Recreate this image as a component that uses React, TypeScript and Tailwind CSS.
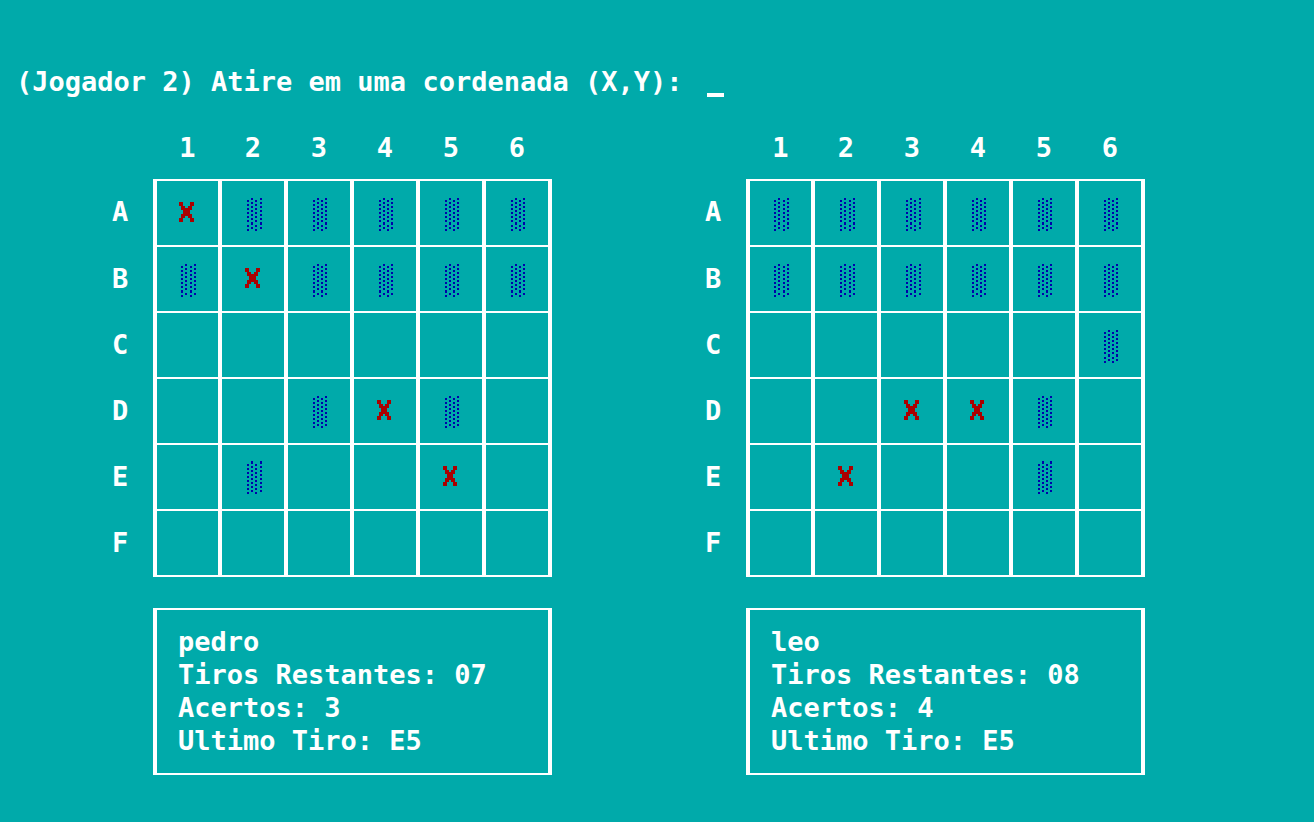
const ROWS = ["A", "B", "C", "D", "E", "F"];
const COLUMNS = [1, 2, 3, 4, 5, 6];

type Player = {
  name: string;
  shots: string;
  hits: string;
  last: string;
  board: string[];
  dotColumns: number[][];
};

// "x" is a hit, "o" is a cell in shade, "." is open water
const PLAYERS: Player[] = [
  {
    name: "pedro",
    shots: "07",
    hits: "3",
    last: "E5",
    board: ["xooooo", "oxoooo", "......", "..oxo.", ".o..x.", "......"],
    dotColumns: [[0, 4, 9, 13], [1, 5, 9, 14]],
  },
  {
    name: "leo",
    shots: "08",
    hits: "4",
    last: "E5",
    board: ["oooooo", "oooooo", ".....o", "..xxo.", ".x..o.", "......"],
    dotColumns: [[0, 4, 9, 13], [1, 5, 10, 14], [1, 5, 9, 14]],
  },
];

const EVEN_COLUMNS = [1, 5, 9, 13];

// [high columns, low columns], each dot as [top, height]
const dots = (tops: number[], tall?: number) => tops.map((t) => [t, t === tall ? 3 : 2]);
const DOTS_A = [dots([0, 4, 8, 12, 16, 20, 24, 29], 24), dots([2, 6, 10, 14, 18, 22, 27, 31])];
const DOTS_B = [dots([0, 4, 8, 12, 16, 20, 24, 29]), dots([2, 6, 10, 14, 18, 22, 26, 31], 26)];
const DOTS_D = [dots([0, 4, 8, 12, 16, 20, 24, 28]), dots([2, 6, 10, 14, 18, 22, 26, 30])];
const DOTS_E = [dots([-1, 4, 8, 12, 16, 20, 24, 28], -1), DOTS_D[1]];
const DOT_ROWS = [DOTS_A, DOTS_B, DOTS_A, DOTS_D, DOTS_E, DOTS_D];

function Shade({ xs, row }: { xs: number[]; row: number }) {
  return (
    <svg
      width="16"
      height="36"
      viewBox="0 -1 16 36"
      className="mt-1 ml-6 block fill-[#0000aa]"
      shapeRendering="crispEdges"
      aria-label="Água"
    >
      {xs.map((x, i) =>
        DOT_ROWS[row][i % 2 ? 0 : 1].map(([y, h]) => <rect key={`${x}-${y}`} x={x} y={y} width="2" height={h} />),
      )}
    </svg>
  );
}

function Hit({ column }: { column: number }) {
  const left = column === 0 ? 0 : 1;
  const width = column < 3 ? 15 : 14;
  const right = left + width;
  return (
    <svg
      width="16"
      height="20"
      viewBox="0 0 16 20"
      className="mb-0.5 ml-[22px] block fill-[#aa0000]"
      shapeRendering="crispEdges"
      aria-label="X"
    >
      {[0, 16].map((y) => (
        <g key={y}>
          <rect x={left} y={y} width="4" height="4" />
          <rect x={right - 4} y={y} width="4" height="4" />
        </g>
      ))}
      {[4, 14].map((y) => (
        <g key={y}>
          <rect x={left + 2} y={y} width="4" height="2" />
          <rect x={right - 6} y={y} width="4" height="2" />
        </g>
      ))}
      <rect x={left + 2} y="6" width={width - 4} height="2" />
      <rect x={left + 4} y="8" width={width - 8} height="4" />
      <rect x={left + 2} y="12" width={width - 4} height="2" />
    </svg>
  );
}

function Board({ player }: { player: Player }) {
  return (
    <section>
      <table className="table-fixed border-separate border-spacing-0">
        <colgroup>
          <col className="w-[41px]" />
          <col className="w-[69px]" />
          <col className="w-[66px]" span={5} />
        </colgroup>
        <thead>
          <tr className="h-12 align-top">
            <td />
            {COLUMNS.map((c) => (
              <th
                key={c}
                scope="col"
                className="border-r-4 border-transparent p-0 text-center first-of-type:border-l-4"
              >
                {c}
              </th>
            ))}
          </tr>
        </thead>
        <tbody>
          {ROWS.map((r, y) => (
            <tr key={r} className="h-[66px] first:h-[68px]">
              <th scope="row" className="p-0 pb-1 text-left">
                {r}
              </th>
              {COLUMNS.map((c, x) => (
                <td
                  key={c}
                  className={`border-r-4 border-b-2 border-white p-0 first-of-type:border-l-4 ${y === 0 ? "border-t-2" : ""}`}
                >
                  {player.board[y][x] === "o" && <Shade xs={player.dotColumns[x] ?? EVEN_COLUMNS} row={y} />}
                  {player.board[y][x] === "x" && <Hit column={x} />}
                </td>
              ))}
            </tr>
          ))}
        </tbody>
      </table>
      <div className="mt-[31px] ml-[41px] border-x-4 border-y-2 border-white px-[21px] pt-[15px] pb-4">
        <h2>{player.name}</h2>
        <p>Tiros Restantes: {player.shots}</p>
        <p>Acertos: {player.hits}</p>
        <p>Ultimo Tiro: {player.last}</p>
      </div>
    </section>
  );
}

export default function App() {
  return (
    <main className="min-h-screen bg-[#00aaaa] pt-[65px] pb-8 font-['DejaVu_Sans_Mono',monospace] text-[27px] leading-[33px] font-bold text-white">
      <form className="flex gap-2 pl-4 whitespace-pre">
        <label htmlFor="shot">(Jogador 2) Atire em uma cordenada (X,Y): </label>
        <input
          id="shot"
          className="h-8 w-[17px] border-b-4 border-white bg-transparent outline-none focus:w-20"
          autoComplete="off"
        />
      </form>
      <div className="mt-[33px] flex gap-[153px] pl-28">
        {PLAYERS.map((p) => (
          <Board key={p.name} player={p} />
        ))}
      </div>
    </main>
  );
}
